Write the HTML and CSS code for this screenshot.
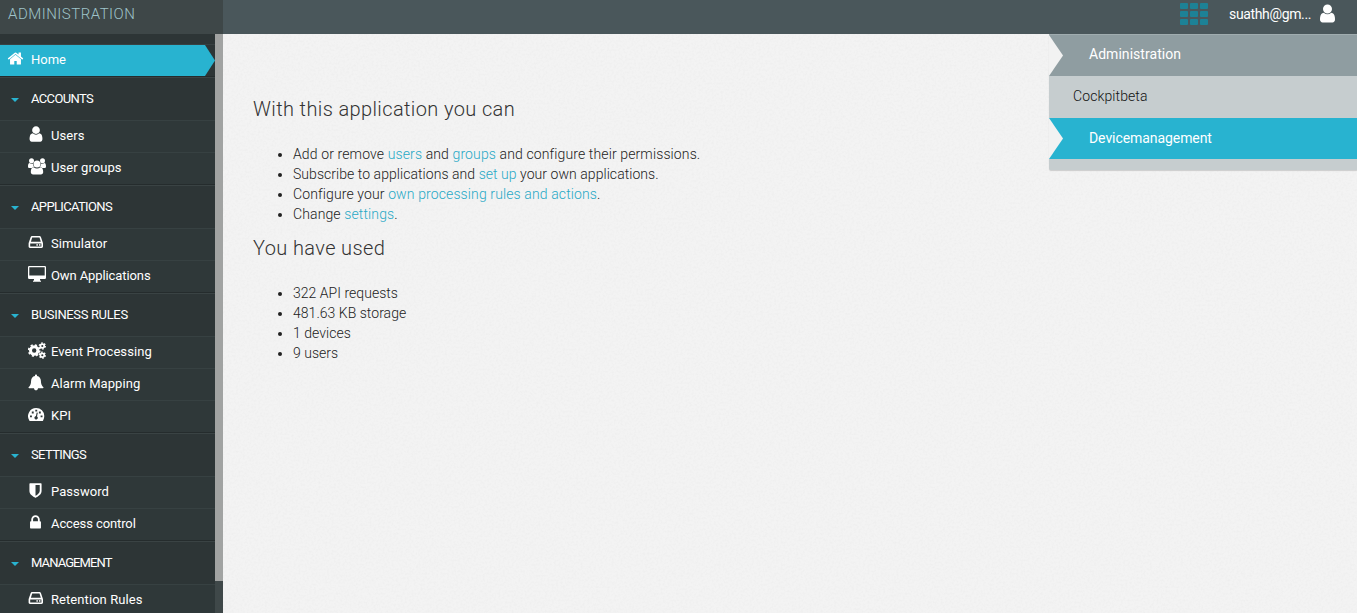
FILE: index.html
```html
<!DOCTYPE html>
<html lang="en">
<head>
<meta charset="utf-8">
<title>Administration</title>
<link rel="stylesheet" href="styles.css">
</head>
<body>
<svg class="defs" width="0" height="0">
  <symbol id="user" viewBox="0 0 1792 1792"><path d="M1536 1399q0 109-62.500 187t-150.500 78h-854q-88 0-150.500-78t-62.500-187q0-85 8.500-160.500t31.500-152 58.500-131 94-89 134.500-34.500q131 128 313 128t313-128q76 0 134.500 34.500t94 89 58.500 131 31.500 152 8.500 160.500zm-256-887q0 159-112.500 271.500t-271.500 112.500-271.500-112.500-112.500-271.500 112.500-271.500 271.500-112.500 271.500 112.500 112.500 271.500z"/></symbol>
  <symbol id="home" viewBox="0 0 1792 1792"><path d="M1472 992v480q0 26-19 45t-45 19h-384v-384h-256v384h-384q-26 0-45-19t-19-45v-480q0-1 .5-3t.5-3l575-474 575 474q1 2 1 6zm223-69l-62 74q-8 9-21 11h-3q-13 0-21-7l-692-577-692 577q-12 8-24 7-13-2-21-11l-62-74q-8-10-7-23.500t11-21.500l719-599q32-26 76-26t76 26l244 204v-195q0-14 9-23t23-9h192q14 0 23 9t9 23v408l219 182q10 8 11 21.500t-7 23.500z"/></symbol>
  <symbol id="group" viewBox="0 0 18 18">
    <circle cx="3.500" cy="2.800" r="2.500"/><circle cx="14.500" cy="2.800" r="2.500"/>
    <path d="M0 8.500C0 6.500.6 5 1.500 5c1.300 1 2.700 1 3.600.4C5 7.200 5.500 8 6 8.800 5 8.900 4.300 9.300 3.800 10H1.600C.6 10 0 9.500 0 8.500zM18 8.500c0-2-.6-3.500-1.500-3.500-1.300 1-2.700 1-3.600.4.100 1.800-.4 2.600-.9 3.400 1 .1 1.700.5 2.200 1.200h2.200c1 0 1.600-.5 1.600-1.500z"/>
    <circle cx="9" cy="6" r="3.500"/>
    <path d="M5.700 9.200c2 1.700 4.600 1.700 6.600 0 2.200 0 2.900 2.100 2.900 4.900 0 1.500-.9 2.500-2.300 2.500H5.100c-1.400 0-2.300-1-2.300-2.500 0-2.800.7-4.900 2.900-4.900z"/>
  </symbol>
  <symbol id="disk" viewBox="0 0 18 18">
    <path fill-rule="evenodd" d="M4.400 2h6.800c.9 0 1.500.5 1.800 1.300l1.700 4.900c.2.500.3.900.3 1.400v3c0 .9-.6 1.400-1.400 1.400H2c-.8 0-1.400-.5-1.400-1.400v-3c0-.5.100-.9.300-1.400l1.700-4.900C2.900 2.500 3.500 2 4.400 2zM4.200 3.600 2.900 7.800h9.900l-1.300-4.200zM2.200 9.400v3h11.200v-3z"/>
    <rect x="8.400" y="10.200" width="1.500" height="1.500"/><rect x="11" y="10.200" width="1.500" height="1.500"/>
  </symbol>
  <symbol id="desktop" viewBox="0 0 18 18"><path fill-rule="evenodd" d="M1.200 0h15.600Q18 0 18 1.200v10.600q0 1.200-1.200 1.200H12v1.300l1 .7v.7H5V15l1-.7V13H1.200Q0 13 0 11.800V1.200Q0 0 1.200 0zM1.300 1.300v8.200h15.400V1.300z"/></symbol>
  <symbol id="gears" viewBox="0 0 18 18">
    <g fill="none" stroke="currentColor">
      <circle cx="6.200" cy="8.500" r="3.700" stroke-width="3"/><circle cx="6.200" cy="8.500" r="5.500" stroke-width="1.700" stroke-dasharray="2.160 2.160"/>
      <circle cx="14.300" cy="4" r="1.900" stroke-width="1.700"/><circle cx="14.300" cy="4" r="3" stroke-width="1.300" stroke-dasharray="1.570 1.570"/>
      <circle cx="14.300" cy="13.200" r="1.900" stroke-width="1.700"/><circle cx="14.300" cy="13.200" r="3" stroke-width="1.300" stroke-dasharray="1.570 1.570"/>
    </g>
  </symbol>
  <symbol id="bell" viewBox="0 0 18 18"><path d="M8 .4c.6 0 1 .4 1 1v.5c2.500.5 3.900 2.400 3.900 4.900 0 3.600 1 5.200 2.600 6.400 0 .6-.4 1-1 1H10c0 1.200-.9 2.100-2 2.100s-2-.9-2-2.100H1.500c-.6 0-1-.4-1-1C2.100 12 3.100 10.400 3.100 6.800c0-2.500 1.400-4.400 3.900-4.900v-.5c0-.6.4-1 1-1z"/></symbol>
  <symbol id="gauge" viewBox="0 0 18 18"><path fill-rule="evenodd" d="M8.200 2a8.100 8.100 0 0 1 8.100 8.100c0 1.600-.4 3-1.200 4.300-.2.400-.5.600-.9.600h-12c-.4 0-.7-.2-.9-.6A8.100 8.100 0 0 1 8.200 2zM2 9.500v1.800h1.900V9.500zM3.800 5.600v1.800h1.900V5.600zM7.300 3.700v1.800h1.900V3.700zM10.900 5.600v1.800h1.900V5.600zM12.600 9.500v1.800h1.900V9.500zM8.700 6.600 7.900 10.200c-.8 0-1.500.7-1.500 1.600a1.700 1.700 0 1 0 2.600-1.400l.8-3.600z"/></symbol>
  <symbol id="shield" viewBox="0 0 1792 1792"><path d="M1344 960v-640h-448v1137q119-63 213-137 235-184 235-360zm192-768v768q0 86-33.500 170.500t-83 150-118 127.500-126.500 103-121 77.500-89.500 49.500-42.500 20q-12 6-26 6t-26-6q-16-7-42.500-20t-89.500-49.500-121-77.500-126.500-103-118-127.500-83-150-33.500-170.500v-768q0-26 19-45t45-19h1152q26 0 45 19t19 45z"/></symbol>
  <symbol id="lock" viewBox="0 0 1792 1792"><path d="M640 768h512v-192q0-106-75-181t-181-75-181 75-75 181v192zm832 96v576q0 40-28 68t-68 28h-960q-40 0-68-28t-28-68v-576q0-40 28-68t68-28h32v-192q0-184 132-316t316-132 316 132 132 316v192h32q40 0 68 28t28 68z"/></symbol>
</svg>
<header class="topbar">
  <div class="brand">ADMINISTRATION</div>
  <div class="tools">
    <div class="grid"><i></i><i></i><i></i><i></i><i></i><i></i><i></i><i></i><i></i></div>
    <span class="account">suathh@gm...</span>
    <svg class="account-icon"><use href="#user"/></svg>
  </div>
</header>
<div class="body">
  <aside class="sidebar">
    <nav class="nav">
      <div class="home-row"><a class="home"><svg><use href="#home"/></svg><span>Home</span></a></div>
      <section><h3>ACCOUNTS</h3>
        <a class="item"><svg class="i-user"><use href="#user"/></svg><span>Users</span></a>
        <a class="item"><svg><use href="#group"/></svg><span>User groups</span></a>
      </section>
      <section><h3>APPLICATIONS</h3>
        <a class="item"><svg><use href="#disk"/></svg><span>Simulator</span></a>
        <a class="item tight"><svg><use href="#desktop"/></svg><span>Own Applications</span></a>
      </section>
      <section><h3 class="rules">BUSINESS RULES</h3>
        <a class="item"><svg><use href="#gears"/></svg><span>Event Processing</span></a>
        <a class="item"><svg><use href="#bell"/></svg><span>Alarm Mapping</span></a>
        <a class="item"><svg><use href="#gauge"/></svg><span>KPI</span></a>
      </section>
      <section><h3>SETTINGS</h3>
        <a class="item"><svg class="i-shield"><use href="#shield"/></svg><span>Password</span></a>
        <a class="item tight"><svg class="i-lock"><use href="#lock"/></svg><span>Access control</span></a>
      </section>
      <section><h3 class="management">MANAGEMENT</h3>
        <a class="item"><svg><use href="#disk"/></svg><span>Retention Rules</span></a>
      </section>
    </nav>
    <div class="scroll"><div class="thumb"></div></div>
  </aside>
  <main class="main">
    <svg class="paper"><filter id="grain" x="0" y="0" width="100%" height="100%"><feTurbulence type="fractalNoise" baseFrequency="0.45" numOctaves="2" stitchTiles="stitch"/><feColorMatrix values="0 0 0 0 0.500  0 0 0 0 0.500  0 0 0 0 0.500  0.180 0 0 0 -0.072"/></filter><rect width="100%" height="100%" filter="url(#grain)"/></svg>
    <div class="content">
      <h2>With this application you can</h2>
      <ul>
        <li>Add or remove <a>users</a> and <a>groups</a> and configure their permissions.</li>
        <li class="subscribe">Subscribe to applications and <a>set up</a> your own applications.</li>
        <li>Configure your <a>own processing rules and actions</a>.</li>
        <li>Change <a>settings</a>.</li>
      </ul>
      <h2 class="used">You have used</h2>
      <ul class="usage">
        <li>322 API requests</li>
        <li>481.63 KB storage</li>
        <li>1 devices</li>
        <li>9 users</li>
      </ul>
    </div>
    <div class="apps">
      <a class="app current">Administration</a>
      <a class="app plain">Cockpitbeta</a>
      <a class="app active">Devicemanagement</a>
    </div>
  </main>
</div>
</body>
</html>
```
FILE: styles.css
```css
* { box-sizing: border-box; }
body { margin: 0; width: 1357px; height: 613px; overflow: hidden; background: #f3f3f3; color: #333; font-family: Roboto, "Open Sans", sans-serif; font-size: 14px; line-height: 20px; }
svg { fill: currentColor; display: block; flex: none; }
.defs { position: absolute; }
h2, h3, ul { margin: 0; font-weight: 300; }

.topbar { display: flex; height: 34px; background: #4a575b; color: #fff; }
.brand { width: 223px; padding: 4px 8px; background: #3e4748; color: #9fc4ca; font-size: 15px; font-weight: 300; letter-spacing: .5px; }
.tools { flex: 1; display: flex; justify-content: flex-end; padding-right: 20px; }
.grid { display: grid; grid-template-columns: repeat(3, 8px); grid-auto-rows: 6px; gap: 2px; margin: 3px 21px 0 0; }
.grid i { background: #1d8296; border-radius: 1px; }
.account { width: 88px; padding-top: 4px; letter-spacing: -.35px; }
.account-icon { width: 21px; height: 21px; margin: 3px -1px 0 0; }

.body { display: flex; height: 579px; }
.sidebar { display: flex; width: 223px; background: #2d3536; color: #fff; overflow: hidden; }
.nav { width: 215px; padding-top: 10px; }
.home-row { height: 33px; border-top: 1px solid #384142; border-bottom: 1px solid #252c2d; }
.home { display: flex; height: 31px; background: #28b3d0; clip-path: polygon(0 0, 205px 0, 215px 50%, 205px 100%, 0 100%); font-size: 13px; font-weight: 400; line-height: 30px; }
.home svg { width: 17px; height: 17px; margin: 5px 7px 0 7px; }
.nav section { border-top: 1px solid #3a4344; border-bottom: 1px solid #252c2d; }
.nav h3 { display: flex; align-items: center; height: 42px; font-size: 13px; font-weight: 400; letter-spacing: -.65px; }
.nav h3.rules { letter-spacing: -.35px; }
.nav h3.management { letter-spacing: -.9px; }
.nav h3::before { content: ""; margin: 1px 12px 0 11px; border: solid transparent; border-width: 4px 4px 0; border-top-color: #28b3d0; }
.item { display: flex; height: 32px; padding-left: 28px; border-top: 1px solid #374142; background: #2f3839; font-size: 13px; letter-spacing: .07px; line-height: 30px; }
.item.tight { letter-spacing: -.1px; }
.item svg { width: 18px; height: 18px; margin: 5px 5px 0 0; }
.item svg.i-user { margin: 4px 6px 0 -1px; }
.item svg.i-shield { width: 17px; height: 17px; margin: 5px 7px 0 -1px; }
.item svg.i-lock { width: 17px; height: 17px; margin: 5px 7px 0 -1px; }
.scroll { width: 8px; background: #3f4849; }
.thumb { height: 547px; background: #a1a3a2; }

.main { position: relative; display: flex; flex: 1; justify-content: space-between; }
.paper { position: absolute; inset: 0; width: 100%; height: 100%; z-index: -1; }
.content { padding: 62px 0 0 30px; }
.content h2 { height: 48px; font-size: 20px; line-height: 26px; letter-spacing: .38px; }
.content h2.used { margin-top: 11px; }
.content ul { padding-left: 40px; font-weight: 300; letter-spacing: .12px; color: #222; }
.content .subscribe { letter-spacing: .05px; }
.content ul.usage { letter-spacing: .03px; }
.content a { color: #28a9c6; }

.apps { width: 308px; height: 136px; background: #c6cdcf; border-radius: 0 0 0 2px; box-shadow: 0 1px 1px #ccc; }
.app { display: block; height: 42px; padding: 10px 0 0 40px; letter-spacing: .04px; }
.current, .active { position: relative; color: #fff; }
.current::before, .active::before { content: ""; position: absolute; left: 0; top: 0; width: 14px; height: 100%; background: #f2f2f2; clip-path: polygon(0 0, 100% 50%, 0 100%); }
.current { border-top: 1px solid #a0acaf; padding-top: 9px; background: #8f9da1; }
.plain { padding-left: 24px; letter-spacing: .1px; font-weight: 300; color: #111; }
.active { height: 41px; background: #28b3d0; letter-spacing: -.07px; }
```
